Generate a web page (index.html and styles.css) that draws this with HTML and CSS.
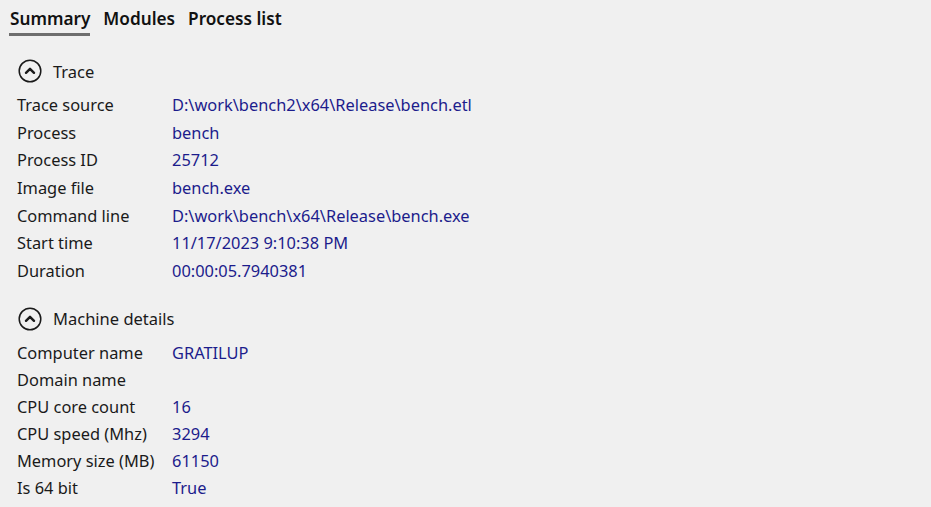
FILE: index.html
```html
<!DOCTYPE html>
<html>
<head>
<meta charset="utf-8">
<link rel="stylesheet" href="styles.css">
</head>
<body>
<div class="tabs">
  <div class="tab active">Summary</div>
  <div class="tab">Modules</div>
  <div class="tab">Process list</div>
</div>
<div class="section">
  <div class="section-header">
    <svg class="toggle" width="24" height="24" viewBox="0 0 24 24"><circle cx="12" cy="12" r="10.8" fill="none" stroke="#1a1a1a" stroke-width="1.5"/><path d="M8 13.8 L12 9.8 L16 13.8" fill="none" stroke="#1a1a1a" stroke-width="2.4" stroke-linecap="round" stroke-linejoin="round"/></svg>
    <span>Trace</span>
  </div>
  <div class="rows first">
    <div class="label">Trace source</div><div class="value">D:\work\bench2\x64\Release\bench.etl</div>
    <div class="label">Process</div><div class="value">bench</div>
    <div class="label">Process ID</div><div class="value">25712</div>
    <div class="label">Image file</div><div class="value">bench.exe</div>
    <div class="label">Command line</div><div class="value">D:\work\bench\x64\Release\bench.exe</div>
    <div class="label">Start time</div><div class="value">11/17/2023 9:10:38 PM</div>
    <div class="label">Duration</div><div class="value">00:00:05.7940381</div>
  </div>
</div>
<div class="section second-section">
  <div class="section-header">
    <svg class="toggle" width="24" height="24" viewBox="0 0 24 24"><circle cx="12" cy="12" r="10.8" fill="none" stroke="#1a1a1a" stroke-width="1.5"/><path d="M8 13.8 L12 9.8 L16 13.8" fill="none" stroke="#1a1a1a" stroke-width="2.4" stroke-linecap="round" stroke-linejoin="round"/></svg>
    <span>Machine details</span>
  </div>
  <div class="rows second">
    <div class="label">Computer name</div><div class="value">GRATILUP</div>
    <div class="label">Domain name</div><div class="value"></div>
    <div class="label">CPU core count</div><div class="value">16</div>
    <div class="label">CPU speed (Mhz)</div><div class="value">3294</div>
    <div class="label">Memory size (MB)</div><div class="value">61150</div>
    <div class="label">Is 64 bit</div><div class="value">True</div>
  </div>
</div>
</body>
</html>
```
FILE: styles.css
```css
html, body {
  margin: 0;
  padding: 0;
  background: #f0f0f0;
  font-family: "Noto Sans", "Open Sans", sans-serif;
  color: #1a1a1a;
}
body {
  width: 931px;
  height: 507px;
  overflow: hidden;
}
.tabs {
  display: flex;
  gap: 13px;
  padding-left: 9px;
  height: 36px;
}
.tab {
  font-size: 17.2px;
  font-weight: 600;
  line-height: 22px;
  padding-top: 8px;
  height: 36px;
  box-sizing: border-box;
  color: #111;
}
.tab.active {
  border-bottom: 3px solid #6e6e6e;
  padding-left: 1px;
}
.section {
  padding-left: 17px;
}
.section-header {
  display: flex;
  align-items: center;
  height: 28px;
  margin-top: 21px;
  margin-bottom: 6px;
  font-size: 16.5px;
}
.section.second-section .section-header {
  margin-top: 20px;
}
.toggle {
  margin-left: 1px;
  margin-right: 11px;
}
.rows {
  display: grid;
  grid-template-columns: 155px auto;
  font-size: 16.4px;
}
.rows.first > div {
  height: 27.67px;
  line-height: 27.67px;
}
.rows.second > div {
  height: 27px;
  line-height: 27px;
}
.label {
  color: #1a1a1a;
  white-space: nowrap;
}
.value {
  color: #1c1c8c;
  white-space: nowrap;
}
```
